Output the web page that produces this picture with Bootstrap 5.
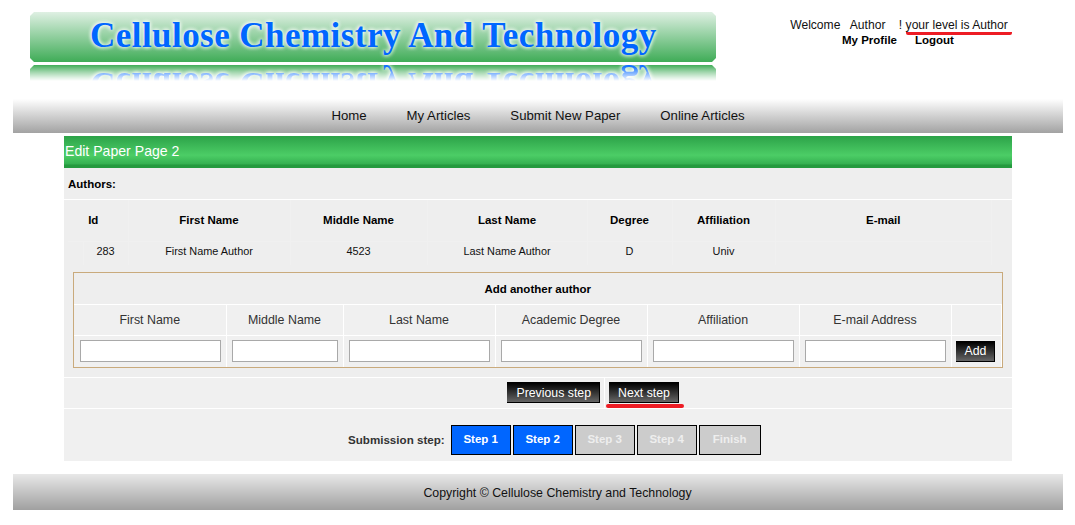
<!DOCTYPE html>
<html lang="en">
<head>
<meta charset="utf-8">
<title>Edit Paper Page 2</title>
<link href="https://cdn.jsdelivr.net/npm/bootstrap@5.3.0/dist/css/bootstrap.min.css" rel="stylesheet">
<style>
body{margin:0;background:#fff;font-family:"Liberation Sans",Arial,sans-serif;font-size:12px;color:#000;padding:12px 12px 0 13px;width:1075px;height:525px;overflow:hidden}
.hdr{height:85px;padding-left:17px}
.brand-col{width:686px;flex:none}
.brand{height:50px;padding-left:60px;background:linear-gradient(#dff0e3,#3fac57);clip-path:polygon(4px 0,calc(100% - 4px) 0,100% 4px,100% calc(100% - 4px),calc(100% - 4px) 100%,4px 100%,0 calc(100% - 4px),0 4px);font:700 35px/48px "Liberation Serif",serif;letter-spacing:.45px;color:#06f;text-shadow:0 0 4px #fff,0 0 4px #fff;white-space:nowrap}
.brand-mirror{height:16px;margin-top:3px;overflow:hidden;-webkit-mask-image:linear-gradient(#000,transparent);mask-image:linear-gradient(#000,transparent)}
.brand-mirror .brand{transform:scaleY(-1);line-height:62px}
.user-box{width:300px;margin-left:35px;padding-top:6px;line-height:14px;text-align:center;flex:none}
.welcome{color:#111;font-size:12.1px}
.red-ul{border-bottom:3px solid #ed1c24;border-radius:2px;padding:0 4px 0 0;display:inline-block;line-height:13px}
.user-links{margin-top:-2px;font-weight:700;font-size:11.5px;padding-right:6px}
.user-links a{color:#000;text-decoration:none;margin:0 9px}
.bar{height:36px;width:1050px}
.menu{background:linear-gradient(#fff 5%,#a2a2a2)}
.menu a{color:#111;text-decoration:none;font-size:13.2px;line-height:37px;padding:0 20px;white-space:nowrap}
.main{width:948px;margin:3px 0 13px 51px;background:#f0f0f0}
.title-bar{height:32px;background:linear-gradient(#2ca248,#4ccd66 60%,#34b050 88%,#249a3e 90%);color:#fff;font-size:14.1px;line-height:30px;padding-left:1px}
.auth-label{height:31px;line-height:32px;padding-left:4px;font-weight:700;font-size:11.5px;background:#eee;border-bottom:1px solid #fff;box-sizing:content-box}
.auth-wrap{background:#eee;padding:0 20px 0 4px;height:72px}
.auth-tbl{width:100%;table-layout:fixed;border-collapse:collapse}
.auth-tbl th{height:41px;text-align:center;font-size:11.5px;border-right:1px solid #f0f0f0;padding-top:2px}
.auth-tbl td{height:24px;padding-bottom:6px;text-align:center;font-size:10.9px;border-right:1px solid #f0f0f0;color:#111}
.auth-tbl thead tr{border-bottom:1px solid #f0f0f0}
.id-head{padding-right:10px}
.box-wrap{background:#eee;padding:0 9px 9px 9px;border-bottom:1px solid #fff;box-sizing:content-box}
.add-box{border:1px solid #c9aa7c;height:96px}
.add-tbl{width:100%;table-layout:fixed;border-collapse:collapse}
.add-tbl th{height:31px;padding-top:4px;text-align:center;font-size:11.5px;border-bottom:1px solid #fff}
.add-tbl td{border:1px solid #fff;border-width:0 1px 1px 0;text-align:center;height:31px;font-size:12.4px;color:#333;background:#f0f0f0;padding:2px 0 0}
.add-tbl tr:last-child td{border-bottom:0;height:32px;padding:0 5px}
.add-tbl tr:last-child td:first-child{padding-left:6px}
.add-tbl tr:last-child td:last-child{padding-left:4px;padding-right:0;text-align:left}
.add-tbl input{display:block;width:100%;height:22px;border:1px solid #a9a9a9;background:#fff;padding:0;margin:0}
.dark-btn{background:linear-gradient(#000,#666);color:#fff;border:solid #000;border-width:1px 1px 1px 0;border-radius:0;font-size:12.3px;line-height:14px;padding:2px 8px 2px 9px;height:21px;font-family:inherit;white-space:nowrap}
.dark-btn:hover{background:linear-gradient(#000,#666);color:#fff;border-color:#000}
.nav-row{height:31px;border-bottom:1px solid #fff}
.nav-left{width:541px;flex:none;padding:4px 4px 0 0;border-right:1px solid #fff}
.nav-right{padding:4px 0 0 4px}
.next-wrap{position:relative}
.next-wrap::after{content:"";position:absolute;left:-3px;right:-5px;bottom:-5px;height:4px;background:#ed1c24;border-radius:2px}
.steps{height:52px;font-weight:700;padding:10px 0 0 284px;gap:2px}
.steps .lbl{color:#333;margin-right:4px;font-size:11.6px}
.step-btn{width:60px;height:30px;border:1px solid #000;color:#fff;font-weight:700;font-size:11.5px}
.step-wide{width:62px}
.step-on{background:#06f}
.step-off{background:#ccc;color:#eee}
.foot{background:linear-gradient(#e8e8e8,#a0a0a0);line-height:39px;text-align:center;font-size:12.35px;color:#111;padding-left:39px}
</style>
</head>
<body>
<header class="hdr d-flex">
  <div class="brand-col">
    <div class="brand">Cellulose Chemistry And Technology</div>
    <div class="brand-mirror" aria-hidden="true"><div class="brand">Cellulose Chemistry And Technology</div></div>
  </div>
  <div class="user-box">
    <div class="welcome">Welcome &nbsp; Author &nbsp; &nbsp;! <span class="red-ul">your level is Author</span></div>
    <div class="user-links"><a href="#">My Profile</a><a href="#">Logout</a></div>
  </div>
</header>
<nav class="bar menu d-flex justify-content-center">
  <a href="#">Home</a><a href="#">My Articles</a><a href="#">Submit New Paper</a><a href="#">Online Articles</a>
</nav>
<main class="main">
  <div class="title-bar">Edit Paper Page 2</div>
  <div class="auth-label">Authors:</div>
  <div class="auth-wrap">
    <table class="auth-tbl">
      <colgroup><col style="width:15px"><col style="width:45px"><col style="width:162px"><col style="width:137px"><col style="width:160px"><col style="width:85px"><col style="width:103px"><col></colgroup>
      <thead><tr><th colspan="2" class="id-head">Id</th><th>First Name</th><th>Middle Name</th><th>Last Name</th><th>Degree</th><th>Affiliation</th><th>E-mail</th></tr></thead>
      <tbody><tr><td></td><td>283</td><td>First Name Author</td><td>4523</td><td>Last Name Author</td><td>D</td><td>Univ</td><td></td></tr></tbody>
    </table>
  </div>
  <div class="box-wrap">
    <div class="add-box">
      <table class="add-tbl">
        <colgroup><col style="width:152px"><col style="width:117px"><col style="width:152px"><col style="width:152px"><col style="width:152px"><col style="width:152px"><col></colgroup>
        <thead><tr><th colspan="7">Add another author</th></tr></thead>
        <tbody>
          <tr><td>First Name</td><td>Middle Name</td><td>Last Name</td><td>Academic Degree</td><td>Affiliation</td><td>E-mail Address</td><td></td></tr>
          <tr><td><input type="text"></td><td><input type="text"></td><td><input type="text"></td><td><input type="text"></td><td><input type="text"></td><td><input type="text"></td><td><button class="dark-btn btn" type="button">Add</button></td></tr>
        </tbody>
      </table>
    </div>
  </div>
  <div class="nav-row d-flex">
    <div class="nav-left d-flex justify-content-end align-items-start"><button class="dark-btn btn" type="button">Previous step</button></div>
    <div class="nav-right d-flex align-items-start"><span class="next-wrap d-flex"><button class="dark-btn btn" type="button">Next step</button></span></div>
  </div>
  <div class="steps d-flex align-items-center">
    <span class="lbl">Submission step:</span>
    <div class="step-btn step-on d-flex align-items-center justify-content-center">Step 1</div>
    <div class="step-btn step-on d-flex align-items-center justify-content-center">Step 2</div>
    <div class="step-btn step-off d-flex align-items-center justify-content-center">Step 3</div>
    <div class="step-btn step-off d-flex align-items-center justify-content-center">Step 4</div>
    <div class="step-btn step-wide step-off d-flex align-items-center justify-content-center">Finish</div>
  </div>
</main>
<footer class="bar foot">Copyright © Cellulose Chemistry and Technology</footer>
</body>
</html>
